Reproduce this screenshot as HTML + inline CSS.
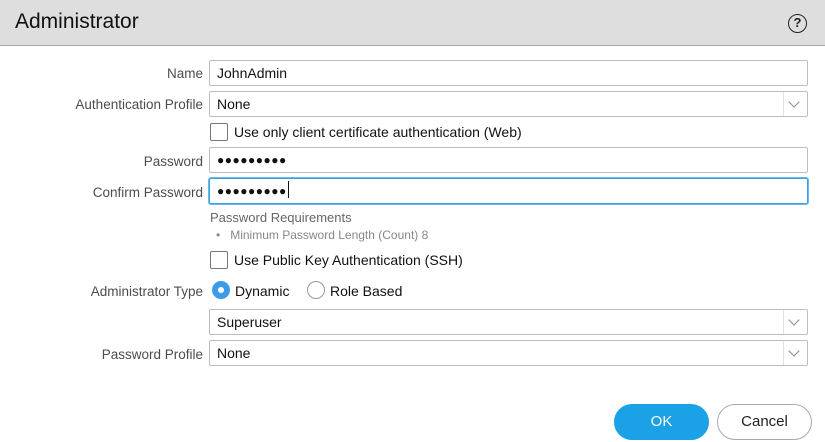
<!DOCTYPE html>
<html><head><style>
*{box-sizing:border-box;margin:0;padding:0}
body{width:825px;height:442px;background:#fff;font-family:"Liberation Sans",sans-serif;position:relative;overflow:hidden;color:#222}
.hdr{position:absolute;left:0;top:0;width:825px;height:46px;background:#dedede;border-bottom:1px solid #a8a8a8}
.hdr h1{position:absolute;left:15px;top:10px;font-size:21px;font-weight:normal;color:#111}
.help{position:absolute;left:788px;top:14px;width:19px;height:19px;border:1.6px solid #222;border-radius:50%;font-size:13px;font-weight:bold;text-align:center;line-height:16px;color:#222}
.lbl{position:absolute;right:622px;font-size:13.5px;color:#4c4c4c;white-space:nowrap}
.f{position:absolute;left:209px;width:599px;height:26px;border:1px solid #bdbdbd;border-radius:2px;font-size:14px;padding-left:7px;line-height:24px;color:#111}
.f.sel:after{content:"";position:absolute;left:573px;top:0;bottom:0;border-left:1px solid #e2e2e2}
.chev{position:absolute;right:9px;top:6px;width:8px;height:8px;border-right:1.3px solid #888;border-bottom:1.3px solid #888;transform:rotate(45deg)}
.focus{border-color:#3aa0e0;box-shadow:0 0 0 1px #6db9ec}
.dots{font-size:12px;letter-spacing:0.5px}
.cb{position:absolute;left:210px;width:18px;height:18px;border:1px solid #777;border-radius:2px}
.t{position:absolute;font-size:14px;color:#111;white-space:nowrap}
.btn{position:absolute;top:404px;height:36px;width:95px;border-radius:18px;font-size:15px;text-align:center;line-height:34px}
</style></head><body>
<div class="hdr"><h1>Administrator</h1><div class="help">?</div></div>

<div class="lbl" style="top:66px">Name</div>
<div class="f" style="top:60px">JohnAdmin</div>

<div class="lbl" style="top:97px">Authentication Profile</div>
<div class="f sel" style="top:91px">None<span class="chev"></span></div>

<div class="cb" style="top:123px"></div>
<div class="t" style="left:234px;top:124px">Use only client certificate authentication (Web)</div>

<div class="lbl" style="top:154px">Password</div>
<div class="f dots" style="top:147px">●●●●●●●●●</div>

<div class="lbl" style="top:185px">Confirm Password</div>
<div class="f dots focus" style="top:178px">●●●●●●●●●<span style="border-left:1.5px solid #111;margin-left:1px;height:17px;display:inline-block;vertical-align:-3px"></span></div>

<div class="t" style="left:210px;top:210px;font-size:13px;color:#666">Password Requirements</div>
<div class="t" style="left:216px;top:228px;font-size:12px;color:#888">•&nbsp;&nbsp; Minimum Password Length (Count) 8</div>

<div class="cb" style="top:251px"></div>
<div class="t" style="left:234px;top:252px">Use Public Key Authentication (SSH)</div>

<div class="lbl" style="top:284px">Administrator Type</div>
<div style="position:absolute;left:212px;top:281px;width:18px;height:18px;border-radius:50%;background:#3d9be9"><div style="position:absolute;left:6px;top:6px;width:6px;height:6px;border-radius:50%;background:#fff"></div></div>
<div class="t" style="left:235px;top:283px">Dynamic</div>
<div style="position:absolute;left:307px;top:281px;width:18px;height:18px;border-radius:50%;border:1px solid #999"></div>
<div class="t" style="left:330px;top:283px">Role Based</div>

<div class="f sel" style="top:309px">Superuser<span class="chev"></span></div>

<div class="lbl" style="top:347px">Password Profile</div>
<div class="f sel" style="top:340px">None<span class="chev"></span></div>

<div class="btn" style="left:614px;background:#1aa1e6;color:#fff;border:1px solid #1aa1e6">OK</div>
<div class="btn" style="left:717px;border:1px solid #aaa;color:#222">Cancel</div>
</body></html>
